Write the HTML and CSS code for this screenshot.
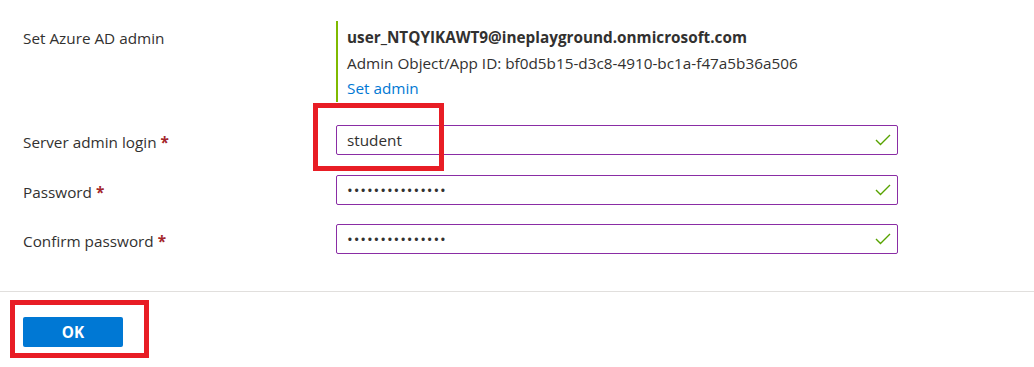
FILE: index.html
```html
<!DOCTYPE html>
<html lang="en">
<head>
  <meta charset="UTF-8">
  <meta name="viewport" content="width=device-width, initial-scale=1.0">
  <title>Set admin</title>
  <link rel="stylesheet" href="styles.css">
</head>
<body>

<div class="blade">
  <div class="fields">
    <div class="row row-admin">
      <div class="label">Set Azure AD admin</div>
      <div class="admin-info">
        <div class="admin-name">user_NTQYIKAWT9@ineplayground.onmicrosoft.com</div>
        <div>Admin Object/App ID: bf0d5b15-d3c8-4910-bc1a-f47a5b36a506</div>
        <a class="link" href="#">Set admin</a>
      </div>
    </div>

    <div class="row">
      <label class="label" for="login">Server admin login <span class="req">*</span></label>
      <div class="field">
        <input type="text" id="login" value="student">
        <svg class="check" width="16" height="12" viewBox="0 0 16 12"><polyline points="1,6 5.5,10.5 15,1" fill="none" stroke="#57a300" stroke-width="1.4"/></svg>
      </div>
    </div>

    <div class="row">
      <label class="label" for="password">Password <span class="req">*</span></label>
      <div class="field">
        <input type="password" id="password" value="passwordpasswor">
        <svg class="check" width="16" height="12" viewBox="0 0 16 12"><polyline points="1,6 5.5,10.5 15,1" fill="none" stroke="#57a300" stroke-width="1.4"/></svg>
      </div>
    </div>

    <div class="row">
      <label class="label" for="confirm">Confirm password <span class="req">*</span></label>
      <div class="field">
        <input type="password" id="confirm" value="passwordpasswor">
        <svg class="check" width="16" height="12" viewBox="0 0 16 12"><polyline points="1,6 5.5,10.5 15,1" fill="none" stroke="#57a300" stroke-width="1.4"/></svg>
      </div>
    </div>
  </div>

  <div class="footer">
    <button class="btn-ok">OK</button>
  </div>

  <!-- red annotation boxes drawn over the screenshot -->
  <div class="mark mark-login"></div>
  <div class="mark mark-ok"></div>
</div>

</body>
</html>
```

FILE: styles.css
```css
body {
  margin: 0;
  font-family: 'Open Sans', 'Noto Sans', sans-serif;
  font-size: 15.3px;
  color: #323130;
  background: #fff;
}
.blade {
  position: relative;
  height: 367px;
}
.fields {
  padding: 21px 0 0 23px;
  height: 292px;
  box-sizing: border-box;
  border-bottom: 1px solid #e1dfdd;
}
.row {
  display: grid;
  grid-template-columns: 313px 562px;
  align-items: center;
  margin-bottom: 19.5px;
}
.row-admin {
  align-items: start;
  margin-bottom: 23.5px;
}
.row-admin .label {
  padding-top: 4px;
}
.label {
  line-height: 26px;
  padding-top: 4px;
}
.req {
  color: #a4262c;
  font-weight: bold;
}
.admin-info {
  border-left: 2px solid #7fba00;
  padding: 4px 0 0 9px;
  line-height: 25.5px;
}
.admin-name {
  font-weight: bold;
}
.link {
  color: #0078d4;
  text-decoration: none;
}
.field {
  position: relative;
  height: 30px;
}
.field input {
  width: 100%;
  height: 30px;
  box-sizing: border-box;
  border: 1px solid #8a2da5;
  border-radius: 2px;
  padding: 0 30px 0 10px;
  font-family: inherit;
  font-size: 15.3px;
  color: #323130;
  outline: none;
}
.field input[type=password] {
  letter-spacing: 0.9px;
}
.check {
  position: absolute;
  right: 7px;
  top: 9px;
}
.footer {
  padding: 25px 0 0 23px;
}
.btn-ok {
  width: 100px;
  height: 30px;
  background: #0078d4;
  color: #fff;
  border: none;
  border-radius: 2px;
  font-family: inherit;
  font-size: 15.3px;
  font-weight: bold;
}
.mark {
  position: absolute;
  border: 5px solid #e81d25;
  box-sizing: border-box;
}
.mark-login {
  left: 313px;
  top: 103px;
  width: 131px;
  height: 68px;
}
.mark-ok {
  left: 10px;
  top: 300px;
  width: 139px;
  height: 58px;
}
```
